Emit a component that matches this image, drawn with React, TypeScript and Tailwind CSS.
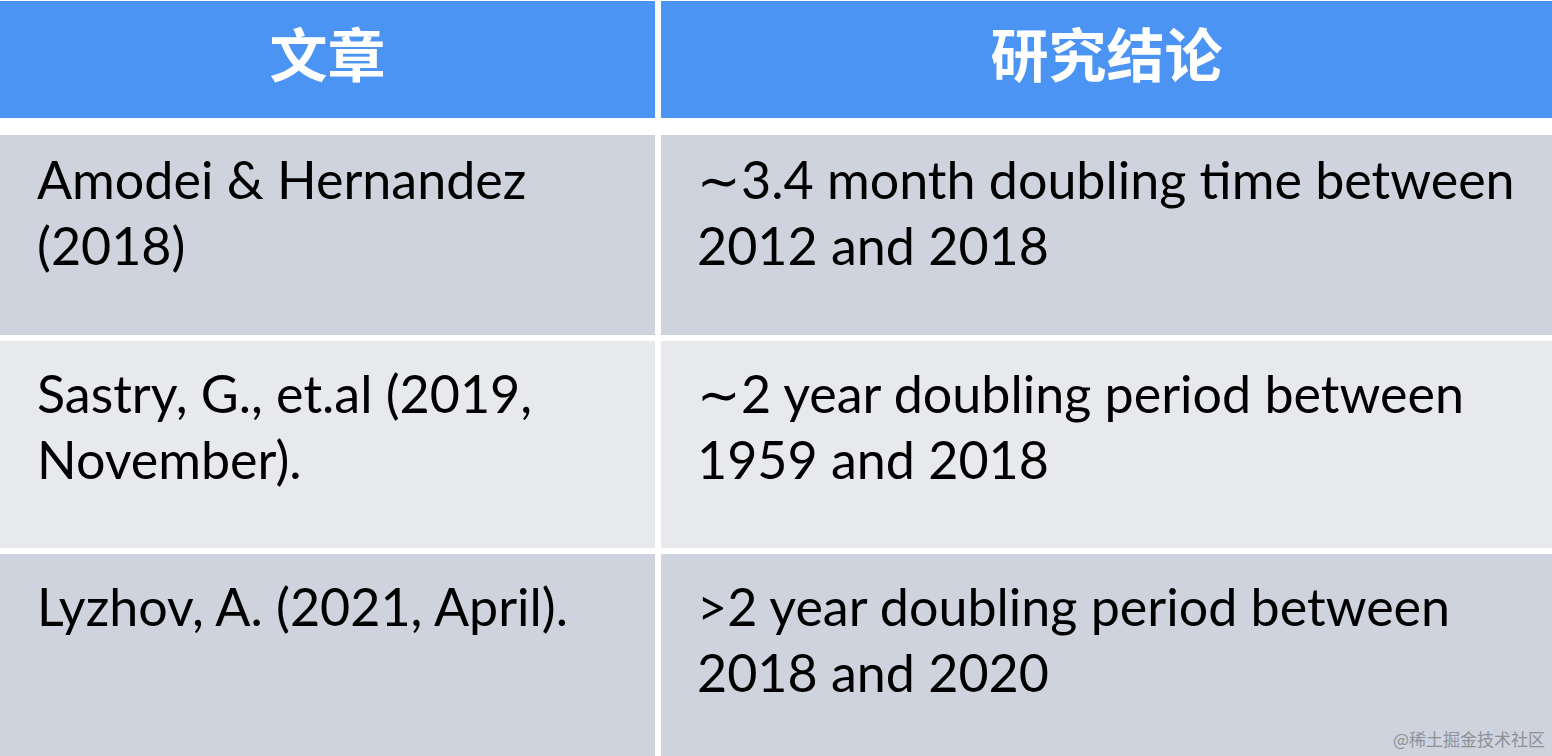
const rows = [
  {
    paper: ['Amodei & Hernandez', '(2018)'],
    finding: ['∼3.4 month doubling time between', '2012 and 2018'],
    bg: 'bg-[#cfd3dd]',
    h: 'h-[200px]',
    pt: 'pt-[11px]',
  },
  {
    paper: ['Sastry, G., et.al (2019,', 'November).'],
    finding: ['∼2 year doubling period between', '1959 and 2018'],
    bg: 'bg-[#e8e9ed]',
    h: 'h-[207px]',
    pt: 'pt-[19px]',
  },
  {
    paper: ['Lyzhov, A. (2021, April).'],
    finding: ['>2 year doubling period between', '2018 and 2020'],
    bg: 'bg-[#cfd3dd]',
    h: 'h-[203px]',
    pt: 'pt-[19px]',
  },
]

function Lines({ lines }: { lines: string[] }) {
  return (
    <>
      {lines.map((l) => (
        <div key={l} className="whitespace-nowrap">{l}</div>
      ))}
    </>
  )
}

function App() {
  return (
    <div className="relative w-[1552px] h-[756px] overflow-hidden bg-white pt-px font-['Lato','Liberation_Sans',sans-serif]">
      <div className="grid grid-cols-[655px_1fr] gap-x-[6px]">
        <div className="h-[117px] pb-[14px] bg-[#4b94f3] flex items-center justify-center text-white text-[58px] font-bold font-['Noto_Sans_CJK_SC',sans-serif]">
          文章
        </div>
        <div className="h-[117px] pb-[14px] bg-[#4b94f3] flex items-center justify-center text-white text-[58px] font-bold font-['Noto_Sans_CJK_SC',sans-serif]">
          研究结论
        </div>
      </div>
      <div className="mt-[17px] flex flex-col gap-[6px]">
        {rows.map((r) => (
          <div key={r.paper[0]} className="grid grid-cols-[655px_1fr] gap-x-[6px]">
            <div className={`${r.bg} ${r.h} ${r.pt} pl-[37px] text-black text-[52px] leading-[66px]`}>
              <Lines lines={r.paper} />
            </div>
            <div className={`${r.bg} ${r.h} ${r.pt} pl-[36px] text-black text-[52px] leading-[66px]`}>
              <Lines lines={r.finding} />
            </div>
          </div>
        ))}
      </div>
      <div className="absolute right-[7px] bottom-[5px] text-[17px] text-[#8e9198] font-['Noto_Sans_CJK_SC',sans-serif]">
        @稀土掘金技术社区
      </div>
    </div>
  )
}

export default App
